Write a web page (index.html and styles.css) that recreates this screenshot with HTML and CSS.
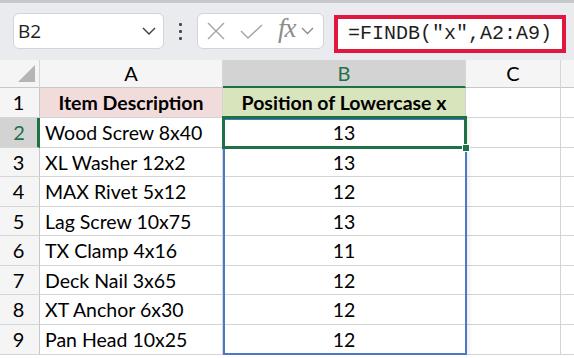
FILE: index.html
```html
<!DOCTYPE html>
<html lang="en">
  <head>
    <meta charset="utf-8" />
    <title>FINDB lowercase x</title>
    <link rel="stylesheet" href="styles.css">
  </head>
  <body>
    <header class="toolbar">
      <div class="namebox">
        <span>B2</span>
        <svg class="chevron" width="14" height="8" viewBox="0 0 14 8">
          <polyline points="1,1 7,7 13,1" fill="none" stroke="#3b3b3b" stroke-width="1.4" />
        </svg>
      </div>
      <div class="dots"><i></i><i></i><i></i></div>
      <div class="fxbox">
        <svg width="18" height="18" viewBox="0 0 18 18">
          <path d="M1 1 L17 17 M17 1 L1 17" stroke="#a3a3a3" stroke-width="1.4" />
        </svg>
        <svg width="23" height="15" viewBox="0 0 23 15">
          <polyline points="1,7 8,14 22,1" fill="none" stroke="#a3a3a3" stroke-width="1.4" />
        </svg>
        <span class="fx">fx</span>
        <svg width="13" height="8" viewBox="0 0 13 8">
          <polyline points="1,1 6.5,6.5 12,1" fill="none" stroke="#8a8a8a" stroke-width="1.3" />
        </svg>
      </div>
      <div class="formula">=FINDB("x",A2:A9)</div>
    </header>

    <main class="sheet">
      <div class="corner"><span></span></div>
      <div class="colhead">A</div>
      <div class="colhead sel">B</div>
      <div class="colhead">C</div>
      <div class="colhead"></div>

      <div class="rowhead">1</div>
      <div class="cell head-a">Item Description</div>
      <div class="cell head-b">Position of Lowercase x</div>
      <div class="cell"></div>
      <div class="cell"></div>

      <div class="rowhead sel">2</div>
      <div class="cell">Wood Screw 8x40</div>
      <div class="cell num">13</div>
      <div class="cell"></div>
      <div class="cell"></div>

      <div class="rowhead">3</div>
      <div class="cell">XL Washer 12x2</div>
      <div class="cell num">13</div>
      <div class="cell"></div>
      <div class="cell"></div>

      <div class="rowhead">4</div>
      <div class="cell">MAX Rivet 5x12</div>
      <div class="cell num">12</div>
      <div class="cell"></div>
      <div class="cell"></div>

      <div class="rowhead">5</div>
      <div class="cell">Lag Screw 10x75</div>
      <div class="cell num">13</div>
      <div class="cell"></div>
      <div class="cell"></div>

      <div class="rowhead">6</div>
      <div class="cell">TX Clamp 4x16</div>
      <div class="cell num">11</div>
      <div class="cell"></div>
      <div class="cell"></div>

      <div class="rowhead">7</div>
      <div class="cell">Deck Nail 3x65</div>
      <div class="cell num">12</div>
      <div class="cell"></div>
      <div class="cell"></div>

      <div class="rowhead">8</div>
      <div class="cell">XT Anchor 6x30</div>
      <div class="cell num">12</div>
      <div class="cell"></div>
      <div class="cell"></div>

      <div class="rowhead">9</div>
      <div class="cell">Pan Head 10x25</div>
      <div class="cell num">12</div>
      <div class="cell"></div>
      <div class="cell"></div>

      <div class="range"></div>
      <div class="active"><span class="handle"></span></div>
    </main>
  </body>
</html>
```

FILE: styles.css
```css
*,
*::before,
*::after {
  box-sizing: border-box;
}

* {
  margin: 0;
}

body {
  background: #ffffff;
  color: #000;
  font-family: Lato, "Open Sans", sans-serif;
  overflow: hidden;
}

/* formula bar */

.toolbar {
  display: flex;
  align-items: flex-start;
  height: 60px;
  padding-top: 10px;
  padding-left: 13px;
  background: #e9ebee;
  border-top: 3px solid #c6c8cb;
}

.namebox {
  display: flex;
  align-items: center;
  justify-content: space-between;
  width: 151px;
  height: 36px;
  padding: 0 7px 0 4px;
  background: #fff;
  border: 1px solid #d2d4d7;
  border-radius: 6px;
  font-family: "Open Sans", sans-serif;
  font-size: 19px;
  color: #1d1d1d;
}

.dots {
  display: flex;
  flex-direction: column;
  gap: 4px;
  margin: 10px 15px 0 15px;
}

.dots i {
  display: block;
  width: 3px;
  height: 3px;
  background: #4a4a4a;
  border-radius: 1px;
}

.fxbox {
  display: flex;
  align-items: center;
  gap: 15px;
  width: 127px;
  height: 36px;
  padding-left: 9px;
  background: #fff;
  border: 1px solid #d2d4d7;
  border-radius: 6px;
}

.fxbox .fx {
  font-family: "Liberation Serif", serif;
  font-style: italic;
  font-size: 27px;
  color: #8c8c8c;
  margin: -6px -10px 0 0;
  letter-spacing: -1px;
}

.formula {
  width: 232px;
  height: 38px;
  margin-left: 10px;
  margin-top: 2px;
  padding: 2px 0 0 10px;
  background: #fff;
  border: 4px solid #e0183f;
  font-family: "Liberation Mono", monospace;
  font-size: 20px;
  color: #1f1f1f;
  line-height: 26px;
}

/* grid */

.sheet {
  position: relative;
  display: grid;
  grid-template-columns: 40px 183px 243px 95px 40px;
  grid-template-rows: 28px 30px 30px 29px 30px 29px 30px 29px 30px 30px;
  font-size: 19.5px;
}

.corner {
  background: #f5f5f5;
  border-right: 1px solid #d6d6d6;
  border-bottom: 1px solid #c8c8c8;
  display: flex;
  align-items: flex-end;
  justify-content: flex-end;
  padding: 0 4px 5px 0;
}

.corner span {
  width: 0;
  height: 0;
  border-left: 17px solid transparent;
  border-bottom: 17px solid #b5b5b5;
}

.colhead {
  background: #f5f5f5;
  border-right: 1px solid #d6d6d6;
  border-bottom: 1px solid #c8c8c8;
  text-align: center;
  line-height: 27px;
  font-size: 20px;
}

.colhead.sel {
  background: #d3d3d3;
  color: #1e7145;
  border-bottom: 2px solid #1e7145;
}

.rowhead {
  background: #f5f5f5;
  border-right: 1px solid #c8c8c8;
  border-bottom: 1px solid #d6d6d6;
  text-align: center;
  padding-right: 2px;
  line-height: 29px;
  font-size: 20px;
}

.rowhead.sel {
  background: #d3d3d3;
  color: #1e7145;
  border-right: 3px solid #1e7145;
  padding-left: 3px;
}

.cell {
  border-right: 1px solid #d4d4d4;
  border-bottom: 1px solid #d4d4d4;
  padding-left: 5px;
  line-height: 29px;
  white-space: nowrap;
  overflow: hidden;
}

.head-a,
.head-b {
  font-weight: bold;
  text-align: center;
  padding-left: 0;
}

.head-a {
  background: #f2dcdb;
}

.head-b {
  background: #d8e4bc;
}

.num {
  text-align: center;
  padding-left: 0;
}

/* selection overlays: absolute grid children take the grid area as their box */

.range {
  position: absolute;
  grid-column: 3 / 4;
  grid-row: 3 / 11;
  inset: 0 -1px 0 0;
  border: 2px solid #4a78c8;
  box-shadow: 3px 0 4px rgba(0, 0, 0, 0.06);
}

.active {
  position: absolute;
  grid-column: 3 / 4;
  grid-row: 3 / 4;
  inset: -2px -1px -1px -1px;
  border: 3px solid #1e7145;
}

.handle {
  position: absolute;
  right: -6px;
  bottom: -6px;
  width: 8px;
  height: 8px;
  background: #1e7145;
  border: 1px solid #fff;
}
```
